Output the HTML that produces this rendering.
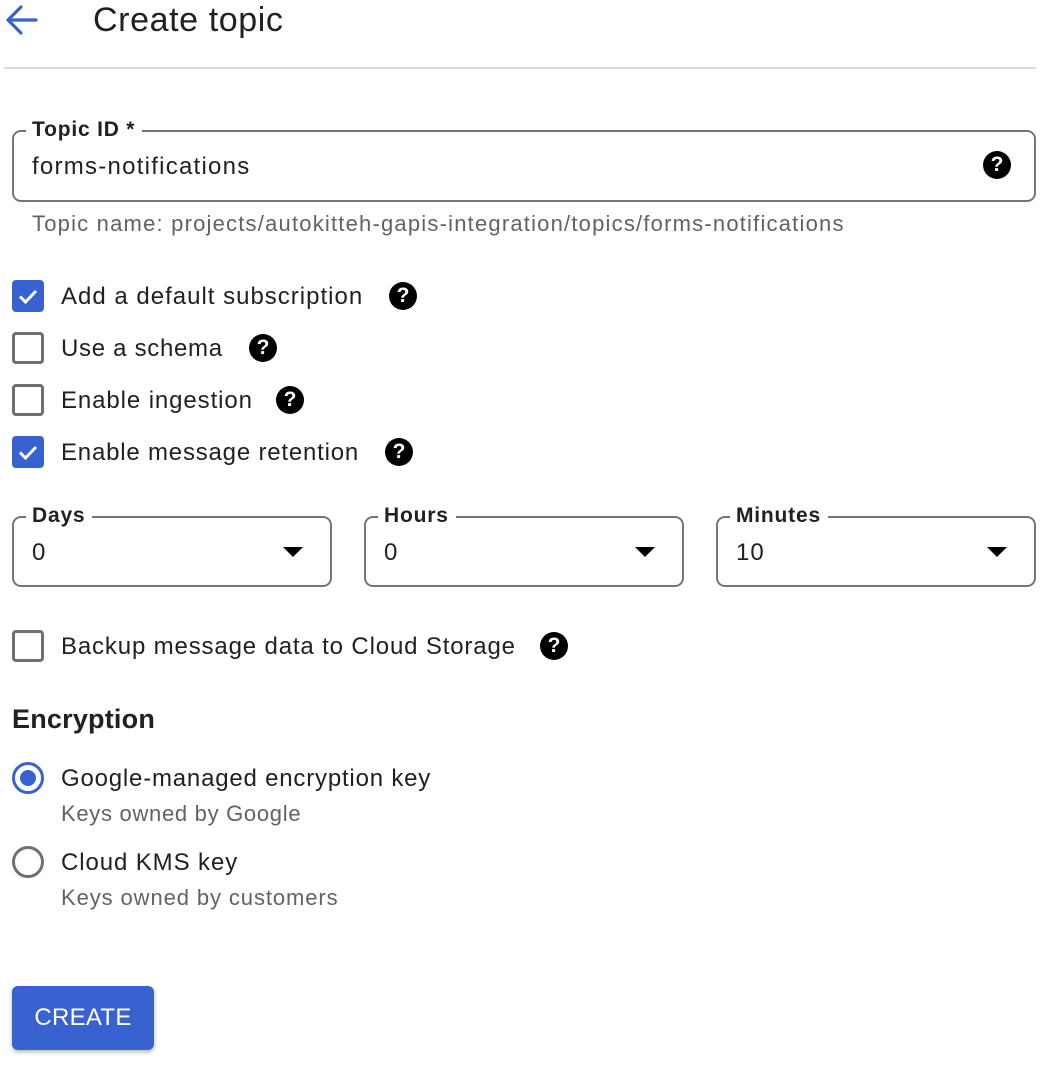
<!DOCTYPE html>
<html><head><meta charset="utf-8"><style>
*{margin:0;padding:0;box-sizing:border-box}
body{width:1040px;height:1066px;background:#fff;font-family:"Liberation Sans",Arial,sans-serif;color:#202124;position:relative;overflow:hidden}
.a{position:absolute;white-space:nowrap}
.box{position:absolute;border:2px solid #74777a;border-radius:9px}
.lbl{position:absolute;background:#fff;padding:0 7px 0 6px;font-size:21px;font-weight:bold;line-height:24px;color:#202124;letter-spacing:0.8px}
.cb{position:absolute;left:12px;width:32px;height:32px;border:3px solid #6f7073;border-radius:4px}
.cb.on{background:#3762d0;border-color:#3762d0}
.t{position:absolute;left:61px;font-size:24px;line-height:30px;letter-spacing:0.9px;white-space:nowrap}
.help{position:absolute;width:28px;height:28px;border-radius:50%;background:#000;color:#fff;font-weight:bold;font-size:21px;line-height:28px;text-align:center}
.tri{position:absolute;width:0;height:0;border-left:10px solid transparent;border-right:10px solid transparent;border-top:10px solid #000}
.sub{position:absolute;left:61px;font-size:22px;color:#5f6368;line-height:26px;letter-spacing:0.7px;white-space:nowrap}
</style></head><body>
<svg class="a" style="left:3px;top:3px" width="36" height="34" viewBox="0 0 36 34"><path d="M33 17H5M18 4L5 17l13 13" fill="none" stroke="#3762d0" stroke-width="3.2" stroke-linecap="round" stroke-linejoin="round"/></svg>
<div class="a" style="left:93px;top:0px;font-size:34px;line-height:40px;color:#202124;letter-spacing:0.6px">Create topic</div>
<div class="a" style="left:4px;top:67px;width:1032px;height:2px;background:#dadce0"></div>

<div class="box" style="left:12px;top:130px;width:1024px;height:72px"></div>
<div class="lbl" style="left:26px;top:118px">Topic ID *</div>
<div class="a" style="left:32px;top:152px;font-size:24px;line-height:30px;letter-spacing:1.25px">forms-notifications</div>
<div class="help" style="left:983px;top:151px">?</div>
<div class="a" style="left:32px;top:211px;font-size:22px;line-height:26px;color:#5f6368;letter-spacing:1.2px">Topic name: projects/autokitteh-gapis-integration/topics/forms-notifications</div>

<div class="cb on" style="top:280px"><svg width="26" height="26" viewBox="0 0 26 26" style="position:absolute;left:0;top:0"><path d="M5 13.5l5.5 5.5L21 8" fill="none" stroke="#fff" stroke-width="3"/></svg></div>
<div class="t" style="top:282px;letter-spacing:1px">Add a default subscription</div>
<div class="help" style="left:389px;top:282px">?</div>

<div class="cb" style="top:332px"></div>
<div class="t" style="top:334px;letter-spacing:0.7px">Use a schema</div>
<div class="help" style="left:249px;top:334px">?</div>

<div class="cb" style="top:384px"></div>
<div class="t" style="top:386px">Enable ingestion</div>
<div class="help" style="left:276px;top:386px">?</div>

<div class="cb on" style="top:436px"><svg width="26" height="26" viewBox="0 0 26 26" style="position:absolute;left:0;top:0"><path d="M5 13.5l5.5 5.5L21 8" fill="none" stroke="#fff" stroke-width="3"/></svg></div>
<div class="t" style="top:438px;letter-spacing:0.8px">Enable message retention</div>
<div class="help" style="left:385px;top:438px">?</div>

<div class="box" style="left:12px;top:516px;width:320px;height:71px"></div>
<div class="lbl" style="left:26px;top:504px">Days</div>
<div class="a" style="left:32px;top:538px;font-size:24px;line-height:30px">0</div>
<div class="tri" style="left:283px;top:547px"></div>

<div class="box" style="left:364px;top:516px;width:320px;height:71px"></div>
<div class="lbl" style="left:378px;top:504px">Hours</div>
<div class="a" style="left:384px;top:538px;font-size:24px;line-height:30px">0</div>
<div class="tri" style="left:635px;top:547px"></div>

<div class="box" style="left:716px;top:516px;width:320px;height:71px"></div>
<div class="lbl" style="left:730px;top:504px">Minutes</div>
<div class="a" style="left:736px;top:538px;font-size:24px;line-height:30px;letter-spacing:1px">10</div>
<div class="tri" style="left:987px;top:547px"></div>

<div class="cb" style="top:630px"></div>
<div class="t" style="top:632px;letter-spacing:0.85px">Backup message data to Cloud Storage</div>
<div class="help" style="left:540px;top:632px">?</div>

<div class="a" style="left:12px;top:702px;font-size:27px;line-height:34px;font-weight:bold;color:#202124;letter-spacing:0.2px">Encryption</div>

<div class="a" style="left:12px;top:762px;width:32px;height:32px;border:3px solid #3762d0;border-radius:50%"><div style="position:absolute;left:5px;top:5px;width:16px;height:16px;border-radius:50%;background:#3762d0"></div></div>
<div class="t" style="top:764px;letter-spacing:0.8px">Google-managed encryption key</div>
<div class="sub" style="top:801px">Keys owned by Google</div>

<div class="a" style="left:12px;top:846px;width:32px;height:32px;border:3px solid #6f7073;border-radius:50%"></div>
<div class="t" style="top:848px">Cloud KMS key</div>
<div class="sub" style="top:885px;letter-spacing:0.9px">Keys owned by customers</div>

<div class="a" style="left:12px;top:986px;width:142px;height:64px;background:#3762d0;border-radius:6px;box-shadow:0 2px 4px rgba(0,0,0,.3);color:#fff;font-size:24px;line-height:64px;text-align:center;letter-spacing:0.3px">CREATE</div>
</body></html>
